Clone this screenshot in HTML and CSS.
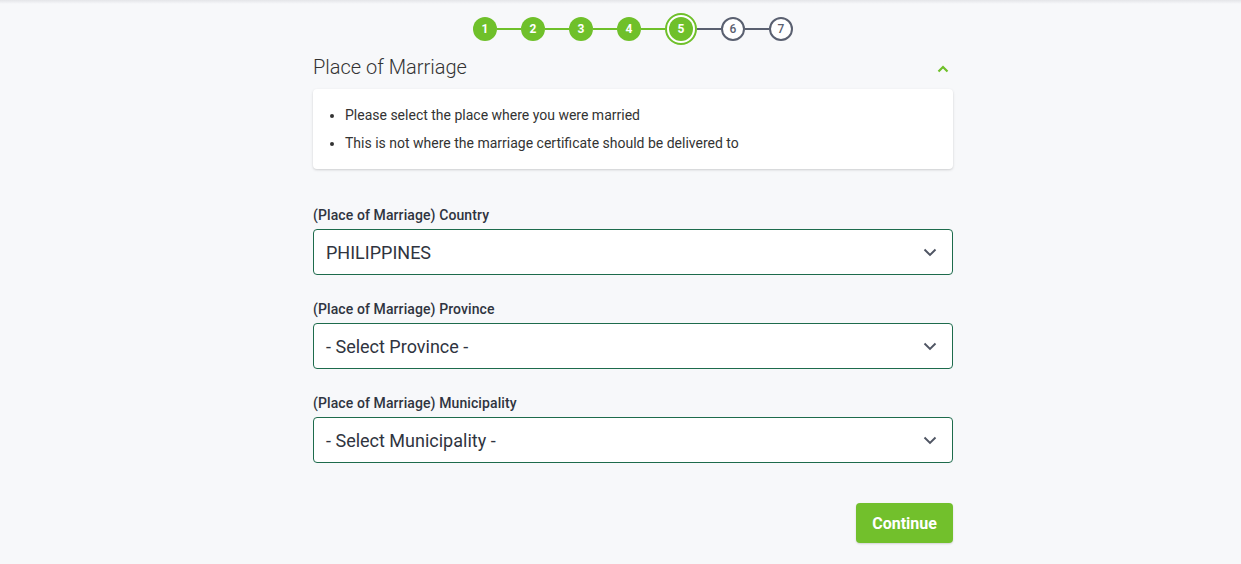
FILE: index.html
```html
<!DOCTYPE html>
<html>
<head>
<meta charset="utf-8">
<link rel="stylesheet" href="styles.css">
</head>
<body>
<div class="topshade"></div>
<main class="page">
  <div class="stepper">
    <span class="step done">1</span><span class="bar done"></span>
    <span class="step done">2</span><span class="bar done"></span>
    <span class="step done">3</span><span class="bar done"></span>
    <span class="step done">4</span><span class="bar done"></span>
    <span class="step current"><span class="inner">5</span></span><span class="bar"></span>
    <span class="step todo">6</span><span class="bar"></span>
    <span class="step todo">7</span>
  </div>

  <div class="section-head">
    <h1 class="title">Place of Marriage</h1>
    <svg class="collapse" width="12" height="8" viewBox="0 0 12 8"><path d="M1.5 6.5 L6 2 L10.5 6.5" fill="none" stroke="#6fc02a" stroke-width="2.2"/></svg>
  </div>

  <div class="card">
    <ul class="notes">
      <li>Please select the place where you were married</li>
      <li>This is not where the marriage certificate should be delivered to</li>
    </ul>
  </div>

  <div class="fields">
    <div class="field">
      <label class="label">(Place of Marriage) Country</label>
      <div class="select"><span>PHILIPPINES</span><svg class="chev" width="14" height="9" viewBox="0 0 14 9"><path d="M1.5 1.5 L7 7 L12.5 1.5" fill="none" stroke="#4f5563" stroke-width="1.9"/></svg></div>
    </div>
    <div class="field">
      <label class="label">(Place of Marriage) Province</label>
      <div class="select"><span>- Select Province -</span><svg class="chev" width="14" height="9" viewBox="0 0 14 9"><path d="M1.5 1.5 L7 7 L12.5 1.5" fill="none" stroke="#4f5563" stroke-width="1.9"/></svg></div>
    </div>
    <div class="field">
      <label class="label">(Place of Marriage) Municipality</label>
      <div class="select"><span>- Select Municipality -</span><svg class="chev" width="14" height="9" viewBox="0 0 14 9"><path d="M1.5 1.5 L7 7 L12.5 1.5" fill="none" stroke="#4f5563" stroke-width="1.9"/></svg></div>
    </div>
  </div>

  <div class="actions">
    <button class="btn">Continue</button>
  </div>
</main>
</body>
</html>
```

FILE: styles.css
```css
html, body {
  margin: 0;
  padding: 0;
  background: #f7f8fa;
  font-family: Roboto, "Liberation Sans", Arial, sans-serif;
  color: #2f3440;
  height: 564px;
  overflow: hidden;
}
.topshade {
  height: 4px;
  background: linear-gradient(#e4e5e8, rgba(247,248,250,0));
}
.page {
  width: 640px;
  margin-left: 313px;
}
.stepper {
  display: flex;
  align-items: center;
  justify-content: center;
  margin-top: 13px;
  height: 24px;
}
.step {
  box-sizing: border-box;
  width: 24px;
  height: 24px;
  border-radius: 50%;
  display: flex;
  align-items: center;
  justify-content: center;
  font-size: 12px;
  font-weight: 700;
  flex: none;
}
.step.done {
  background: #6fc02a;
  color: #fff;
}
.step.todo {
  border: 2px solid #5a6070;
  background: #fff;
  color: #5a6070;
  font-weight: 500;
}
.step.current {
  width: 32px;
  height: 32px;
  border: 2px solid #6fc02a;
  background: #fff;
  padding: 2px;
}
.step.current .inner {
  width: 24px;
  height: 24px;
  border-radius: 50%;
  background: #6fc02a;
  color: #fff;
  display: flex;
  align-items: center;
  justify-content: center;
}
.bar {
  width: 24px;
  height: 2px;
  background: #5a6070;
  flex: none;
}
.bar.done { background: #6fc02a; }

.section-head {
  display: flex;
  align-items: center;
  justify-content: space-between;
  margin-top: 12px;
  height: 28px;
}
.title {
  margin: 0;
  font-size: 20px;
  font-weight: 300;
  color: #333;
  line-height: 28px;
}
.collapse { margin-right: 4px; margin-top: 4px; }

.card {
  margin-top: 8px;
  background: #fff;
  border-radius: 4px;
  box-shadow: 0 1px 3px rgba(0,0,0,0.12), 0 1px 2px rgba(0,0,0,0.06);
  padding: 17px 0 17px 0;
}
.notes {
  margin: 0;
  padding-left: 32px;
  font-size: 14px;
  color: #333;
}
.notes li {
  line-height: 18px;
  margin-bottom: 10px;
}
.notes li:last-child { margin-bottom: 0; }

.fields {
  margin-top: 36px;
  display: flex;
  flex-direction: column;
  gap: 24px;
}
.field {
  display: flex;
  flex-direction: column;
}
.label {
  font-size: 14px;
  font-weight: 500;
  color: #2f3440;
  line-height: 20px;
  margin-bottom: 4px;
  letter-spacing: 0.1px;
}
.select {
  box-sizing: border-box;
  height: 46px;
  background: #fff;
  border: 1px solid #1d6b4c;
  border-radius: 4px;
  display: flex;
  align-items: center;
  justify-content: space-between;
  padding: 0 15px 0 12px;
  font-size: 18px;
  color: #2f3440;
}
.chev { margin-top: 1px; }

.actions {
  display: flex;
  justify-content: flex-end;
  margin-top: 40px;
}
.btn {
  width: 97px;
  height: 40px;
  border: none;
  border-radius: 4px;
  background: #72c02c;
  color: #fff;
  font-family: Roboto, "Liberation Sans", Arial, sans-serif;
  font-size: 16px;
  font-weight: 700;
  box-shadow: 0 1px 2px rgba(0,0,0,0.15);
}
```
